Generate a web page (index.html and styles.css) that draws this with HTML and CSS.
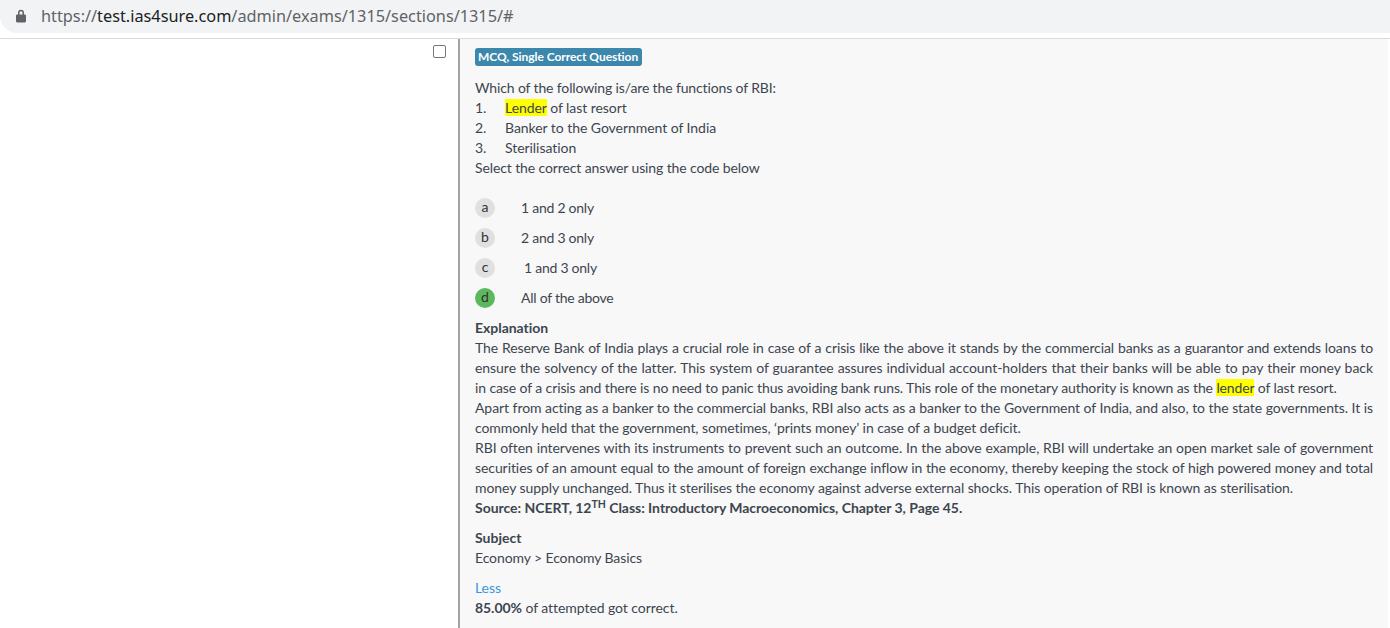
FILE: index.html
```html
<!DOCTYPE html>
<html lang="en">
<head>
<meta charset="utf-8">
<title>Exam section</title>
<link rel="stylesheet" href="styles.css">
</head>
<body>
<header class="browser">
  <div class="address">
    <svg class="lock" width="10" height="14" viewBox="0 0 10 14"><path d="M2 5.5V3.8a3 3 0 0 1 6 0v1.7h.8c.6 0 1.2.5 1.2 1.2v5.6c0 .7-.6 1.2-1.2 1.2H1.2C.6 13.500 0 13 0 12.300V6.700c0-.7.6-1.200 1.200-1.200zm1.500 0h3V3.800a1.500 1.500 0 0 0-3 0z" fill="#5f6368"/></svg>
    <span class="url">https://<b>test.ias4sure.com</b>/admin/exams/1315/sections/1315/#</span>
  </div>
</header>
<main class="page">
  <aside class="side"><span class="check"></span></aside>
  <section class="panel">
    <div class="badge-row"><span class="badge">MCQ, Single Correct Question</span></div>
    <div class="question">
      <p>Which of the following is/are the functions of RBI:</p>
      <p class="item"><span class="num">1.</span><span><mark>Lender</mark> of last resort</span></p>
      <p class="item"><span class="num">2.</span><span>Banker to the Government of India</span></p>
      <p class="item"><span class="num">3.</span><span>Sterilisation</span></p>
      <p class="select">Select the correct answer using the code below</p>
    </div>
    <ul class="options">
      <li><span class="letter">a</span><span class="opt">1 and 2 only</span></li>
      <li><span class="letter">b</span><span class="opt">2 and 3 only</span></li>
      <li><span class="letter">c</span><span class="opt shift">1 and 3 only</span></li>
      <li><span class="letter right">d</span><span class="opt">All of the above</span></li>
    </ul>
    <div class="explain">
      <p class="label"><strong>Explanation</strong></p>
      <p class="first">The Reserve Bank of India plays a crucial role in case of a crisis like the above it stands by the commercial banks as a guarantor and extends loans to <span class="wide">ensure the solvency of the latter. This system of guarantee assures individual account-holders that their banks will be able to pay their money back</span> in case of a crisis and there is no need to panic thus avoiding bank runs. This role of the monetary authority is known as the <mark>lender</mark> of last resort.</p>
      <p>Apart from acting as a banker to the commercial banks, RBI also acts as a banker to the Government of India, and also, to the state governments. It is commonly held that the government, sometimes, ‘prints money’ in case of a budget deficit.</p>
      <p>RBI often intervenes with its instruments to prevent such an outcome. In the above example, RBI will undertake an open market sale of government securities of an amount equal to the amount of foreign exchange inflow in the economy, thereby keeping the stock of high powered money and total money supply unchanged. Thus it sterilises the economy against adverse external shocks. This operation of RBI is known as sterilisation.</p>
      <p class="label"><strong>Source: NCERT, 12<sup>TH</sup> Class: Introductory Macroeconomics, Chapter 3, Page 45.</strong></p>
    </div>
    <div class="subject">
      <p class="label"><strong>Subject</strong></p>
      <p>Economy &gt; Economy Basics</p>
    </div>
    <div class="stats">
      <p><a href="#">Less</a></p>
      <p><strong>85.00%</strong> of attempted got correct.</p>
    </div>
  </section>
</main>
</body>
</html>
```
FILE: styles.css
```css
* { box-sizing: border-box; }
html, body { margin: 0; height: 628px; overflow: hidden; background: #fff; }
body { font-family: Lato, sans-serif; font-size: 14px; line-height: 20px; color: #3d4650; }
p { margin: 0; }
.browser { height: 39px; border-bottom: 1px solid #dcdcdc; padding-bottom: 5px; }
.address { height: 33px; background: #f1f3f4; border-radius: 0 0 0 17px; display: flex; align-items: center; gap: 15px; padding: 0 0 1px 16px; }
.lock { flex: none; }
.url { font-family: "Noto Sans", sans-serif; font-size: 16.3px; color: #5f6368; }
.url b { font-weight: 400; color: #202124; }
.page { display: flex; height: 589px; }
.side { width: 458px; flex: none; display: flex; justify-content: flex-end; padding: 6px 12px 0 0; }
.check { width: 13px; height: 13px; border: 1px solid #767676; border-radius: 2px; background: #fff; }
.panel { width: 930px; flex: none; background: #f8f8f8; border-left: 2px solid #a4a4a4; padding: 8px 15px 0; }
.badge-row { height: 20px; display: flex; align-items: center; margin-bottom: 11px; }
.badge { background: #3c87ac; color: #fff; font-size: 12px; font-weight: 700; line-height: 18px; height: 18px; padding: 0 4px 0 3px; border-radius: 3px; letter-spacing: -.05px; white-space: nowrap; }
mark { background: #ffff00; color: inherit; }
.question { letter-spacing: -.05px; }
.question > p:first-child { letter-spacing: -.13px; }
.select { letter-spacing: -.11px; }
.item { display: flex; }
.num { width: 30px; flex: none; }
.options { list-style: none; margin: 15px 0 0; padding: 0; letter-spacing: -.25px; }
.options li { height: 30px; display: flex; align-items: center; }
.letter { width: 20px; height: 20px; flex: none; border-radius: 50%; background: #e0e0e0; color: #333; text-align: center; font-size: 14px; line-height: 18px; letter-spacing: 0; margin-right: 26px; }
.letter.right { background: #5cb85c; }
.shift { margin-left: 3px; }
.explain { margin-top: 5px; letter-spacing: -.08px; text-align: justify; }
.explain .first { letter-spacing: -.11px; }
.explain .wide { letter-spacing: -.05px; }
.explain .label { letter-spacing: -.03px; }
strong { font-weight: 700; }
sup { font-size: 75%; line-height: 0; position: relative; top: -.5em; vertical-align: baseline; }
.subject { margin-top: 10px; letter-spacing: -.1px; }
.subject .label { letter-spacing: 0; }
.stats { margin-top: 10px; letter-spacing: -.06px; }
.stats a { color: #3a96dd; text-decoration: none; }
```
